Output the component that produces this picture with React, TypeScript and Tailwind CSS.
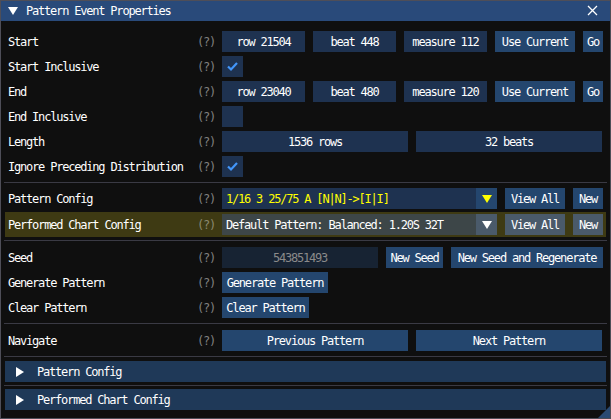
import React from 'react';

const FONT = { fontFamily: '"DejaVu Sans Mono", "Liberation Mono", monospace' };

const frame = 'h-[21px] flex items-center justify-center bg-[#1e3250] text-white';
const btn = 'h-[21px] flex items-center justify-center bg-[#24466e] text-white';

const Check = ({ on }: { on: boolean }) => (
    <div className="w-[21px] h-[21px] bg-[#1e3250] flex items-center justify-center">
        {on && (
            <svg width="13" height="13" viewBox="0 0 13 13">
                <path d="M2 6.5 L5 9.5 L11 3" fill="none" stroke="#4296fa" strokeWidth="2.2" />
            </svg>
        )}
    </div>
);

const Row = ({ label, children, help = 'text-[#808080]' }: { label: string; children?: React.ReactNode; help?: string }) => (
    <div className="flex items-center h-[21px]">
        <div className="w-[189px] text-white whitespace-nowrap">{label}</div>
        <div className={`w-[25px] ${help}`}>(?)</div>
        <div className="flex items-center gap-[8px] flex-1">{children}</div>
    </div>
);

const Sep = ({ className = '' }: { className?: string }) => <div className={`h-px bg-[#3a3a44] -mx-[4px] ${className}`} />;

const Tri = ({ down = false, color = 'white' }: { down?: boolean; color?: string }) => (
    <svg width="10" height="10" viewBox="0 0 10 10">
        {down ? <path d="M0 1 L10 1 L5 9 Z" fill={color} /> : <path d="M1 0 L9 5 L1 10 Z" fill={color} />}
    </svg>
);

const Header = ({ title }: { title: string }) => (
    <div className="h-[21px] -mx-[3px] bg-[#1f3958] flex items-center pl-[10px] gap-[12px] text-white">
        <Tri />
        <span>{title}</span>
    </div>
);

export default function App() {
    return (
        <div className="w-[611px] h-[419px] bg-[#0f0f0f] border border-[#4e4e58] flex flex-col text-[12px] tracking-[-1.2px] leading-none relative overflow-hidden" style={FONT}>
            <div className="h-[21px] -mt-px bg-[#294a7a] flex items-center pl-[7px] pr-[12px] text-white shrink-0">
                <Tri down />
                <span className="ml-[8px] flex-1">Pattern Event Properties</span>
                <svg width="11" height="11" viewBox="0 0 11 11">
                    <path d="M1 1 L10 10 M10 1 L1 10" stroke="white" strokeWidth="1.3" />
                </svg>
            </div>
            <div className="flex flex-col pl-[7px] pr-[7px] pt-[10px]">
                <div className="flex flex-col gap-[4px]">
                    <Row label="Start">
                        <div className={`${frame} w-[83px]`}>row 21504</div>
                        <div className={`${frame} w-[83px]`}>beat 448</div>
                        <div className={`${frame} w-[83px]`}>measure 112</div>
                        <div className={`${btn} w-[80px]`}>Use Current</div>
                        <div className={`${btn} w-[20px]`}>Go</div>
                    </Row>
                    <Row label="Start Inclusive"><Check on /></Row>
                    <Row label="End">
                        <div className={`${frame} w-[83px]`}>row 23040</div>
                        <div className={`${frame} w-[83px]`}>beat 480</div>
                        <div className={`${frame} w-[83px]`}>measure 120</div>
                        <div className={`${btn} w-[80px]`}>Use Current</div>
                        <div className={`${btn} w-[20px]`}>Go</div>
                    </Row>
                    <Row label="End Inclusive"><Check on={false} /></Row>
                    <Row label="Length">
                        <div className={`${frame} w-[186px]`}>1536 rows</div>
                        <div className={`${frame} w-[186px]`}>32 beats</div>
                    </Row>
                    <Row label="Ignore Preceding Distribution"><Check on /></Row>
                </div>
                <Sep className="mt-[5px] mb-[5px]" />
                <Row label="Pattern Config">
                    <div className="h-[21px] w-[275px] flex bg-[#1e3250]">
                        <div className="flex-1 flex items-center pl-[4px] text-[#ffff00] whitespace-nowrap">1/16 3 25/75 A [N|N]-&gt;[I|I]</div>
                        <div className="w-[21px] bg-[#24466e] flex items-center justify-center"><Tri down color="#ffff00" /></div>
                    </div>
                    <div className={`${btn} w-[60px]`}>View All</div>
                    <div className={`${btn} w-[30px]`}>New</div>
                </Row>
                <div className="-mx-[3px] px-[3px] mt-[3px] py-[2px] bg-[#3e3a13]">
                    <Row label="Performed Chart Config" help="text-[#8a8870]">
                        <div className="h-[21px] w-[275px] flex bg-[#3d4648]">
                            <div className="flex-1 flex items-center pl-[4px] text-white whitespace-nowrap">Default Pattern: Balanced: 1.20S 32T</div>
                            <div className="w-[21px] bg-[#4a5a6a] flex items-center justify-center"><Tri down /></div>
                        </div>
                        <div className="h-[21px] w-[60px] flex items-center justify-center bg-[#4a5a6a] text-white">View All</div>
                        <div className="h-[21px] w-[30px] flex items-center justify-center bg-[#4a5a6a] text-white">New</div>
                    </Row>
                </div>
                <Sep className="mt-[3px] mb-[6px]" />
                <div className="flex flex-col gap-[4px]">
                    <Row label="Seed">
                        <div className="h-[21px] w-[156px] flex items-center justify-center bg-[#172333] text-[#8a8a8a]">543851493</div>
                        <div className={`${btn} w-[57px]`}>New Seed</div>
                        <div className={`${btn} w-[152px]`}>New Seed and Regenerate</div>
                    </Row>
                    <Row label="Generate Pattern">
                        <div className={`${btn} w-[106px]`}>Generate Pattern</div>
                    </Row>
                    <Row label="Clear Pattern">
                        <div className={`${btn} w-[87px]`}>Clear Pattern</div>
                    </Row>
                </div>
                <Sep className="mt-[5px] mb-[6px]" />
                <Row label="Navigate">
                    <div className={`${btn} w-[186px]`}>Previous Pattern</div>
                    <div className={`${btn} w-[186px]`}>Next Pattern</div>
                </Row>
                <Sep className="mt-[5px] mb-[4px]" />
                <Header title="Pattern Config" />
                <Sep className="mt-[3px] mb-[3px]" />
                <Header title="Performed Chart Config" />
            </div>
            <svg className="absolute right-0 bottom-0" width="12" height="12" viewBox="0 0 12 12">
                <path d="M12 0 L12 12 L0 12 Z" fill="#2a4a72" />
            </svg>
        </div>
    );
}
